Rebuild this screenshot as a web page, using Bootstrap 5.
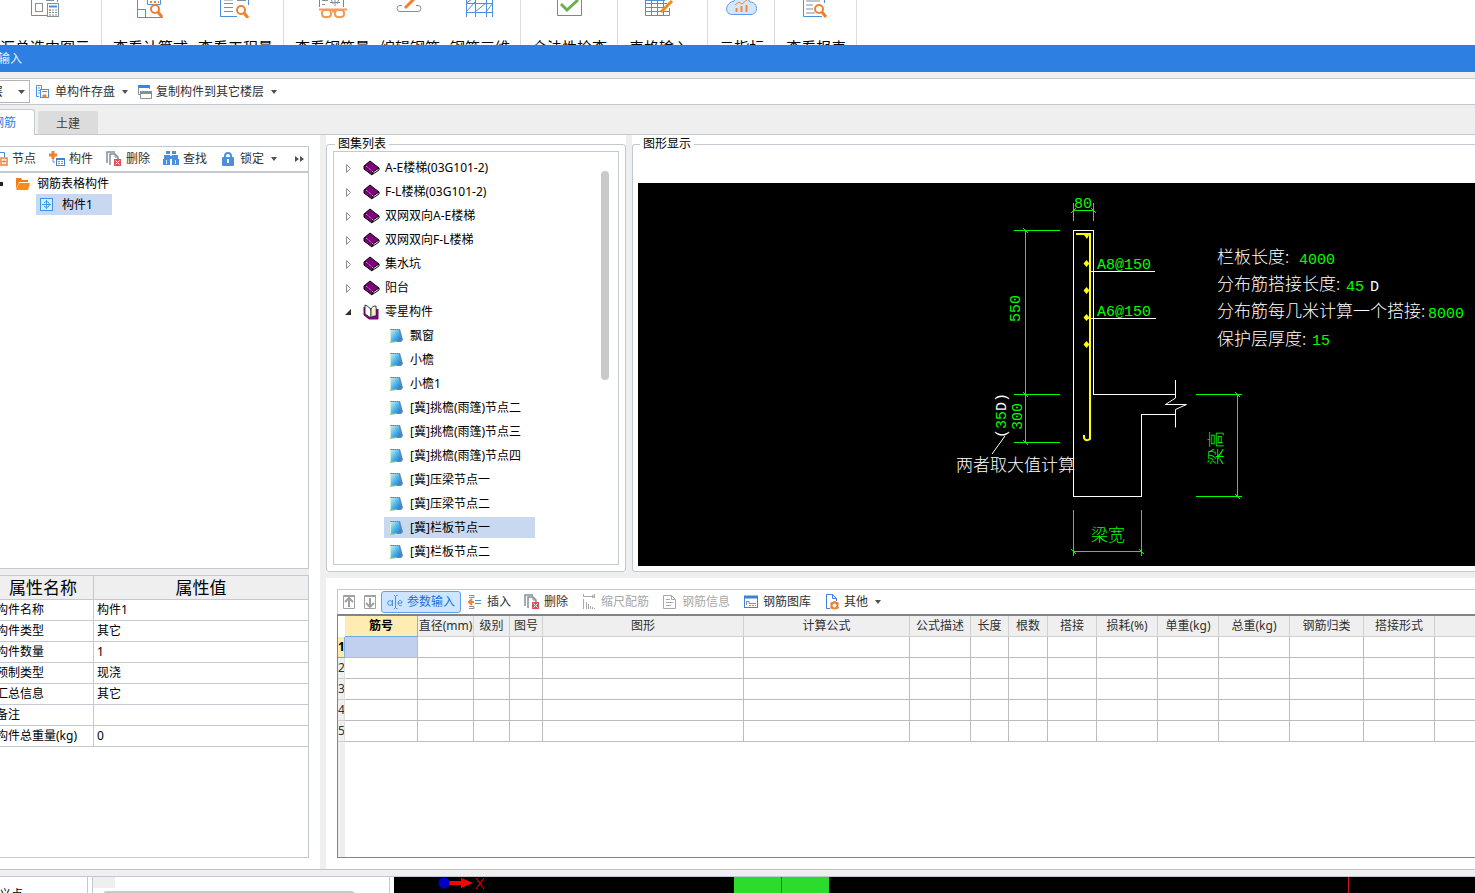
<!DOCTYPE html>
<html lang="zh-CN">
<head>
<meta charset="utf-8">
<meta name="viewport" content="width=device-width, initial-scale=1">
<title>表格输入</title>
<link href="https://cdn.jsdelivr.net/npm/bootstrap@5.3.0/dist/css/bootstrap.min.css" rel="stylesheet">
<style>
:root{--pane:#efefef;--line:#c4c8d0;--sel:#c8d8f0;--blue:#4a90dd}
body{font-family:"Noto Sans","Noto Sans CJK SC",sans-serif;font-size:12px;line-height:20px;color:#000;background:#fff}
svg{display:block;flex:none}
button{font-size:12px}
/* the window is dragged past the left screen edge */
.bleed{margin-left:-40px;background:var(--pane)}
.ribbon{height:45px;font-size:15px}
.r-group{padding:0 10px 0 11px;gap:10px;border-right:1px solid #dcdcdc}
.r-group.first{padding:0 11px 0 0}
.r-group.wide{padding-right:18px}
.r-btn{font-size:15px;line-height:20px;border:0;background:none;padding:0;color:#000}
.r-btn svg{margin:0 auto 19px}
.titlebar{height:27px;line-height:27px;background:#2d7fe2;color:#e6f0fc;padding-left:14px}
.topbar{height:27px;margin-top:6px;background:#fff;border-top:1px solid var(--line);border-bottom:1px solid var(--line)}
.topbar .t-btn{padding:0 5px}
.t-btn{border:0;background:none;height:22px;line-height:20px;padding:0 6px;gap:4px;color:#303030;white-space:nowrap}
.t-btn:disabled{color:#a8a8a8}
.t-btn.picked{border:1px solid #5fa2ea;border-radius:3px;background:#cde5ff;color:#1a72d8;padding:0 5px}
.caret{width:0;height:0;border:3px solid transparent;border-top:4px solid #505050;border-bottom:0;margin-left:3px}
.floor{width:70px;height:23px;border:1px solid #b4b4b4;border-radius:0;font-size:12px;line-height:20px;padding:0 0 0 18px;background-color:#fff;color:#202020;background-position:right 4px center;background-size:7px 4px;background-image:url("data:image/svg+xml,%3Csvg xmlns='http://www.w3.org/2000/svg' viewBox='0 0 7 4'%3E%3Cpath d='M0 0h7L3.500 4z' fill='%23505050'/%3E%3C/svg%3E")}
.tabs{height:30px;border-bottom:1px solid var(--line);padding-left:13px;gap:3px}
.tab-x{height:23px;line-height:24px;padding:1px 18px 0;background:#dcdcdc;color:#404040;border:0;border-radius:3px 3px 0 0}
.tab-x.on{height:26px;background:#fff;color:#2d7fe2;border:1px solid var(--line);border-bottom:0;margin-bottom:-1px}
.side{width:360px;background:#fff;padding:11px 0 11px}
.side-in{width:349px;background:var(--pane);gap:6px}
.boxed{background:#fff;border:1px solid var(--line)}
.tree-box{flex:3 1 1px}
.prop-box{flex:2 1 0}
.bar{height:26px;padding-left:25px;border-bottom:2px solid var(--line)}
.bar .t-btn{margin-right:1px}
.bar .more{margin-left:5px}
.tree-row{height:21px;line-height:21px}
.folder-row{padding-left:38px;gap:6px}
.leaf{width:76px;margin-left:75px;padding-left:4px;gap:8px;background:var(--sel)}
.prop{width:100%;table-layout:fixed;border-collapse:separate;border-spacing:0}
.prop th{height:24px;font-size:17px;font-weight:400;line-height:23px;text-align:center;background:var(--pane);border-bottom:1px solid var(--line);padding:0}
.prop td{height:21px;line-height:20px;border-bottom:1px solid var(--line);padding:0 0 0 3px;white-space:nowrap}
.prop tr>*:first-child{border-right:1px solid var(--line);padding-left:35px}
.prop thead tr>*:first-child{padding-left:32px}
.split{width:6px}
.frame{background:#fff;padding-top:2px}
.group{border:1px solid var(--line);border-radius:3px;min-width:0}
.group legend{float:none;width:auto;font-size:12px;line-height:14px;margin:0 0 0 2px;padding:0 3px}
.atlas{width:300px;padding:0 6px 6px}
.atlas-in{border:1px solid var(--line);padding:4px 9px 0 10px}
.node{height:24px;line-height:24px;gap:5px}
.node .tw{width:14px}
.kid{height:21px;line-height:21px;margin:1px 0 2px 40px;padding-left:4px;gap:5px;width:151px}
.kid.on{background:var(--sel)}
.thumb{width:8px;height:209px;border-radius:4px;background:#c9c9c9;margin-top:15px}
.show{border-right:0;border-radius:3px 0 0 3px;padding:0 0 5px 5px}
.cad{background:#000;margin-top:32px}
.cad text{font-family:"Liberation Mono","Noto Sans CJK SC",monospace;font-size:15px;fill:#0f0}
.cad .hz{font-size:17px;font-family:"Noto Sans CJK SC",sans-serif;font-weight:300}
.cad .w{fill:#fff}
.detail{margin-top:6px;padding:11px 0 11px 11px}
.detail-bar{height:25px;border-top:1px solid #c8c8c8;border-left:1px solid #c8c8c8;padding-left:1px}
.detail-bar .t-btn{margin-right:1px}
.detail-bar .t-btn.sq{padding:0 4px;margin-right:0}
.detail-bar .t-btn.picked{margin-right:0}
.sheet{border:1px solid #808488;border-top-width:2px;border-right:0;background:linear-gradient(to right,#efefef 7px,#fff 7px)}
.grid{width:100%;table-layout:fixed;border-collapse:separate;border-spacing:0}
.grid th{height:21px;line-height:20px;font-weight:400;color:#303030;text-align:center;background:#efefef;border-right:1px solid #d0d0d0;border-bottom:1px solid #d0d0d0;padding:0;white-space:nowrap;overflow:hidden}
.grid td{height:21px;border-right:1px solid #bcbcbc;border-bottom:1px solid #bcbcbc;padding:0;background:#fff}
.grid tr>*:last-child{border-right:0}
.grid tbody th{border-right-color:#e0e0e0;text-align:left}
.grid .hot{background:#ffecb0;font-weight:700;color:#000;border-right-color:#80b4ec;border-bottom-color:#6aaae8}
.grid .cur{background:#c0d0ee}
.grid .blank{background:#fff;border-color:#fff}
.foot-line{height:8px;border-top:1px solid #c4c4c4;border-bottom:1px solid #c0c8d8;background:var(--pane)}
.under{height:16px}
.u1{width:88px;border-right:1px solid var(--line);padding-top:8px}
.u1 span{margin-left:-13px}
.u2{width:298px;margin-left:4px;border:1px solid var(--line);border-width:0 1px}
.u2 .corner{width:22px;height:11px;background:var(--pane)}
.u2 .track{width:252px;height:8px;margin:3px 0 0 10px;border-radius:4px;background:#c9c9c9}
.u3{margin-left:4px;background:#000}
.fit{min-width:0}
</style>
</head>
<body>
<svg width="0" height="0" class="position-absolute" aria-hidden="true">
<defs>
<g id="book"><path d="M1 6 7 1l9 7-6 5z" fill="#800080" stroke="#000"/><path d="M1 6v3l8 6 1-2" fill="#800080" stroke="#000"/><path d="M10 12l6-4v2l-6 4z" fill="#fff" stroke="#000"/><path d="M3 6l7 6" stroke="#e8c0e8" stroke-dasharray="1 1"/></g>
<g id="openbook"><path d="M1 3v8l5 4h9V5" fill="#800080" stroke="#800080"/><path d="M2 1c3 1 5 3 6 5v8L2 10z" fill="#fff" stroke="#333"/><path d="M8 5c1-2 2-3 5-3v10c-3 0-4 0-5 2z" fill="#fff" stroke="#333"/><path d="M10 5v7M12 4v7" stroke="#e8d890"/></g>
<linearGradient id="pg" x2="1" y2="1"><stop offset="0" stop-color="#b8ecff"/><stop offset=".5" stop-color="#46b4ee"/><stop offset="1" stop-color="#1d6fc0"/></linearGradient>
<g id="note"><path d="M3 1h9l3 11-2 2H4z" fill="#5a88b8"/><path d="M2 2h2v12l-2 1z" fill="#d8f0c8"/><path d="M3 2h8l2 10-10 2z" fill="url(#pg)"/><path d="M2 14l7-1v1l-7 1z" fill="#90c8a8"/><path d="M2 1.500h10" stroke="#a09888" stroke-dasharray="1 1"/></g>
<g id="del"><path d="M1 12V1h8M4 14V3h5l3 3v2" fill="none" stroke="#82909a" stroke-width="1.500"/><path d="M9 3v3h3" fill="none" stroke="#82909a"/><rect x="8" y="8" width="7" height="7" fill="#d9505a"/><path d="M9.500 9.500l4 4m0-4l-4 4" stroke="#fff"/></g>
<g id="mag" fill="none" stroke="#ef8030"><circle cx="5" cy="5" r="4" stroke-width="2"/><path d="M8 8l4 5" stroke-width="3"/></g>
</defs>
</svg>

<div class="d-flex flex-column vh-100 overflow-hidden">
<header class="ribbon d-flex overflow-hidden flex-shrink-0">
  <div class="r-group first d-flex"><button class="r-btn text-nowrap"><svg width="32" height="18" viewBox="0 0 32 18" fill="none"><path d="M2.500 0v15.500H18M28.500 0v2" stroke="#4a90dd"/><rect x="6.500" y="3.500" width="7" height="8" stroke="#82909a"/><path d="M17 .5h8" stroke="#82909a"/><rect x="18.500" y="3.500" width="11" height="13" fill="#fff" stroke="#82909a"/><path d="M20 6.500h8" stroke="#4a90dd" stroke-width="2"/><path d="M20 10h8M20 12.500h8M20 15h8" stroke="#82909a" stroke-dasharray="2 1"/><path d="M20 10h2" stroke="#ef8030"/></svg>汇总选中图示</button></div>
  <div class="r-group d-flex"><button class="r-btn text-nowrap"><svg width="32" height="18" viewBox="0 0 32 18" fill="none"><path d="M2.500 0v17.500H28M10.500 9v8M2.500 9.500h8M12.500 0v4.500h13V0" stroke="#4a90dd"/><path d="M15 2h9" stroke="#ef8030" stroke-width="2" stroke-dasharray="2"/><use href="#mag" x="15" y="4"/></svg>查看计算式</button><button class="r-btn text-nowrap"><svg width="32" height="18" viewBox="0 0 32 18" fill="none"><path d="M.5 0v16.500H17M28.500 0v5" stroke="#4a90dd"/><path d="M4 0h9M4 3.500h9M4 7.500h9M4 11.500h9M17 .5h9" stroke="#82909a"/><g transform="translate(16 5)"><use href="#mag"/></g></svg>查看工程量</button></div>
  <div class="r-group d-flex"><button class="r-btn text-nowrap"><svg width="32" height="18" viewBox="0 1 32 18" fill="none"><path d="M2.500 0v8M26.500 0v8" stroke="#4a90dd"/><path d="M5 1.500h6M5 5.500h3M18 0v7M13 3.500h10M14 0l2 5M22 0l-2 5" stroke="#82909a"/><g stroke="#f59a55" stroke-width="2"><path d="M2 10.500h28M15 12.500h3"/><rect x="5" y="11" width="9" height="7" rx="3"/><rect x="18" y="11" width="9" height="7" rx="3"/></g></svg>查看钢筋量</button><button class="r-btn text-nowrap"><svg width="32" height="18" viewBox="0 0 32 18" fill="none"><path d="M8 5.500H6a3 3 0 0 0 0 6h18a3 3 0 0 0 0-6h-2" stroke="#82909a"/><path d="M11 8L20-1" stroke="#ef8030" stroke-width="3"/></svg>编辑钢筋</button><button class="r-btn text-nowrap"><svg width="32" height="18" viewBox="0 0 32 18" fill="none" stroke="#4a90dd"><path d="M2.500 0v17M11.500 0v17M22.500 0v17M28.500 0v17M2 3.500h27M2 12.500h27M2 12l9-10M2 3l5-3M11 12l11-9M22 12l7-9"/></svg>钢筋三维</button></div>
  <div class="r-group d-flex"><button class="r-btn text-nowrap"><svg width="32" height="18" viewBox="0 0 32 18" fill="none"><path d="M3.500 0v15.500h24V0" stroke="#4a90dd"/><path d="M7 4l6 6L24 0" stroke="#6fae50" stroke-width="3"/></svg>合法性检查</button></div>
  <div class="r-group wide d-flex"><button class="r-btn text-nowrap"><svg width="32" height="18" viewBox="0 0 32 18" fill="none"><path d="M2.500 0v15.500h24V8M8.500 0v15M14.500 0v15M20.500 0v15M2 3.500h22M2 7.500h20M2 11.500h24M2 .5h20" stroke="#4a90dd"/><path d="M18 12L29 1" stroke="#ee8a20" stroke-width="3"/></svg>表格输入</button></div>
  <div class="r-group d-flex"><button class="r-btn text-nowrap"><svg width="32" height="18" viewBox="0 0 32 18" fill="none"><path d="M8 1C10-4 22-4 24 2c8 0 9 12 1 12.500H6C-2 14-1 3 8 1z" fill="#d6e6fa" stroke="#5b9be6"/><path d="M10.500 12V8M15.500 12V6M20.500 12V5" stroke="#f0883a" stroke-width="2"/><path d="M9 5l4-3 3 2 6-5" stroke="#f0883a"/></svg>云指标</button></div>
  <div class="r-group d-flex"><button class="r-btn text-nowrap"><svg width="32" height="18" viewBox="0 0 32 18" fill="none"><path d="M3.500 0v16.500H22M24.500 0v3" stroke="#4a90dd"/><path d="M6 1h14M6 5h7M6 9h7M6 13h9" stroke="#82909a"/><g transform="translate(14 4)"><use href="#mag"/></g></svg>查看报表</button></div>
</header>

<div class="bleed d-flex flex-column flex-grow-1">
  <div class="titlebar flex-shrink-0">表格输入</div>
  <div class="topbar d-flex align-items-center flex-shrink-0">
    <select class="form-select floor" aria-label="楼层"><option>首层</option></select>
    <button class="t-btn d-flex align-items-center"><svg width="16" height="16" viewBox="0 0 16 16" fill="none"><path d="M4 12.500H1.500v-11h5V5" stroke="#4a90dd"/><path d="M3 4h2M3 6.500h2M3 9h2" stroke="#4a90dd"/><rect x="5.500" y="5.500" width="8" height="8" fill="#fff" stroke="#4a90dd"/><path d="M7 7.500h5" stroke="#4a90dd"/><path d="M7.500 12h4" stroke="#ef8030" stroke-width="3"/></svg>单构件存盘<span class="caret"></span></button>
    <button class="t-btn d-flex align-items-center"><svg width="14" height="16" viewBox="1 0 14 16"><path d="M1 1h12v3H1z" fill="#3d82d8"/><path d="M1.500 3v7.500H4M12.500 3v2" fill="none" stroke="#82909a"/><path d="M3.500 7.500h11v7h-11z" fill="#fff" stroke="#82909a"/><path d="M3 7h12v3H3z" fill="#82909a"/></svg>复制构件到其它楼层<span class="caret"></span></button>
  </div>
  <div class="tabs d-flex align-items-end flex-shrink-0" role="tablist">
    <button class="tab-x on" role="tab" aria-selected="true">钢筋</button>
    <button class="tab-x" role="tab" aria-selected="false">土建</button>
  </div>

  <main class="d-flex flex-grow-1">
    <aside class="side d-flex flex-shrink-0">
      <div class="side-in d-flex flex-column">
        <section class="tree-box boxed">
          <div class="bar d-flex align-items-center">
            <button class="t-btn d-flex align-items-center"><svg width="16" height="16" viewBox="0 0 16 16" fill="none"><path d="M2.500 13V1.500h10V6" stroke="#4a90dd"/><rect x="9" y="7" width="6" height="7" fill="#fff" stroke="#ef8030" stroke-width="1.500"/><path d="M10 10.500h4M12 8.500v4" stroke="#ef8030"/></svg>节点</button>
            <button class="t-btn d-flex align-items-center"><svg width="16" height="16" viewBox="0 0 16 16" fill="none"><path d="M4 0v8M0 4h8" stroke="#ef8030" stroke-width="3"/><rect x="7.500" y="7.500" width="8" height="7" fill="#fff" stroke="#3d82d8"/><path d="M7 8h9" stroke="#3d82d8" stroke-width="2"/><path d="M9 10.500h5M9 12.500h5" stroke="#82909a" stroke-dasharray="2 1"/><path d="M4 8v3h2" stroke="#82909a"/></svg>构件</button>
            <button class="t-btn d-flex align-items-center"><svg width="16" height="16" viewBox="0 0 16 16"><use href="#del"/></svg>删除</button>
            <button class="t-btn d-flex align-items-center"><svg width="16" height="16" viewBox="0 0 16 16" fill="#4a90dd"><path d="M3 0h4v3H3zM9 0h4v3H9zM1 4h14v4H1zM0 8h7v6H0zM9 8h7v6H9z"/><path d="M3 9h1v4H3zM12 9h1v4h-1zM7 4h2v1H7z" fill="#d8e8fa"/></svg>查找</button>
            <button class="t-btn d-flex align-items-center"><svg width="16" height="16" viewBox="0 0 16 16"><path d="M5 7V5c0-4 6-4 6 0v2" fill="none" stroke="#4a90dd" stroke-width="2"/><rect x="2" y="6" width="12" height="9" rx="1" fill="#4a90dd"/><path d="M7 8h2v4H7z" fill="#fff"/></svg>锁定<span class="caret"></span></button>
            <button class="t-btn more d-flex align-items-center" aria-label="更多"><svg width="9" height="6" viewBox="0 0 9 6"><path d="M0 0l4 3-4 3zM5 0l4 3-4 3z" fill="#505050"/></svg></button>
          </div>
          <div class="tree-row folder-row d-flex align-items-center"><svg width="10" height="8" viewBox="0 0 10 8"><path d="M1 6V2h3v4z" fill="#222"/></svg><svg width="16" height="14" viewBox="0 0 16 14"><path d="M1 12V1h5l1 2h6v2H4z" fill="#f57c10"/><path d="M4 6h11l-2 7H1z" fill="#ff8a18"/></svg>钢筋表格构件</div>
          <div class="tree-row leaf d-flex align-items-center"><svg width="14" height="14" viewBox="0 0 14 14" fill="none"><rect x=".5" y=".5" width="12" height="12" fill="#d4ecff" stroke="#3d94e4"/><path d="M6.500 2v9M2 6.500h9M4 5l2.500-2L9 5v3l-2.500 2L4 8" stroke="#4a98e4"/></svg>构件1</div>
        </section>
        <section class="prop-box boxed">
          <table class="prop"><colgroup><col style="width:133px"><col></colgroup>
            <thead><tr><th>属性名称</th><th>属性值</th></tr></thead>
            <tbody>
              <tr><td>构件名称</td><td>构件1</td></tr>
              <tr><td>构件类型</td><td>其它</td></tr>
              <tr><td>构件数量</td><td>1</td></tr>
              <tr><td>预制类型</td><td>现浇</td></tr>
              <tr><td>汇总信息</td><td>其它</td></tr>
              <tr><td>备注</td><td></td></tr>
              <tr><td>构件总重量(kg)</td><td>0</td></tr>
            </tbody>
          </table>
        </section>
      </div>
    </aside>
    <div class="split flex-shrink-0"></div>

    <div class="fit d-flex flex-column flex-grow-1">
      <div class="d-flex">
        <div class="frame flex-shrink-0">
        <fieldset class="group atlas"><legend>图集列表</legend>
          <div class="atlas-in d-flex justify-content-between">
            <div id="atlasList" class="d-flex flex-column"></div>
            <div class="thumb"></div>
          </div>
        </fieldset>
        </div>
        <div class="split flex-shrink-0"></div>
        <div class="frame fit flex-grow-1">
        <fieldset class="group show"><legend>图形显示</legend>
          <div class="cad overflow-hidden">
          <svg width="837" height="383" viewBox="638 183 837 383" fill="none">
            <g stroke="#0f0" shape-rendering="crispEdges">
              <path d="M1073.500 203v18M1093.500 203v18M1073 210.500h20M1014 230.500h46M1025.500 230v213M1014 394.500h46M1014 442.500h46M1073.500 510v46M1141.500 510v46M1073 551.500h68M1196 394.500h46M1237.500 394v103M1196 496.500h46"/>
              <path d="M1071 213l5-5M1091 208l5 5M1023 228l5 5M1023 392l5 5M1023 440l5 5M1071 549l5 5M1139 549l5 5M1235 392l5 5M1235 494l5 5"/>
            </g>
            <path d="M1175.500 394.500h-82V230.500h-20v266h68v-82h34M1090 271.500h65M1088 318.500h68" stroke="#fff" shape-rendering="crispEdges"/>
            <path d="M1175.500 380v18l-10 6.500h21l-11 5v18" stroke="#fff"/>
            <path d="M1005 436l-13 18" stroke="#fff"/>
            <path d="M1076 234h14v205q-4 3-6-1v-3" stroke="#ff0" stroke-width="2"/>
            <path d="M1084 235h5l-2 4zM1086.500 260l3 3.500-3 3.500-3-3.500zM1086.500 287l3 3.500-3 3.500-3-3.500zM1086.500 314l3 3.500-3 3.500-3-3.500zM1086.500 341l3 3.500-3 3.500-3-3.500z" fill="#ff0"/>
            <text x="1074" y="208">80</text>
            <text x="1097" y="269">A8@150</text>
            <text x="1097" y="316">A6@150</text>
            <text transform="translate(1020 322) rotate(-90)">550</text>
            <text transform="translate(1022 430) rotate(-90)">300</text>
            <text transform="translate(1006 438) rotate(-90)"><tspan class="w">(</tspan>35<tspan class="w">D)</tspan></text>
            <text class="hz w" x="956" y="471">两者取大值计算</text>
            <text class="hz" x="1091" y="541">梁宽</text>
            <text class="hz" transform="translate(1222 465) rotate(-90)">梁高</text>
            <text class="hz w" x="1217" y="263">栏板长度:</text><text x="1299" y="264">4000</text>
            <text class="hz w" x="1217" y="290">分布筋搭接长度:</text><text x="1346" y="291">45</text><text class="w" x="1370" y="291">D</text>
            <text class="hz w" x="1217" y="317">分布筋每几米计算一个搭接:</text><text x="1428" y="318">8000</text>
            <text class="hz w" x="1217" y="345">保护层厚度:</text><text x="1312" y="345">15</text>
          </svg>
          </div>
        </fieldset>
        </div>
      </div>

      <section class="detail bg-white d-flex flex-column flex-grow-1">
        <div class="detail-bar d-flex align-items-center flex-shrink-0">
          <button class="t-btn sq d-flex align-items-center" disabled aria-label="上移"><svg width="13" height="16" viewBox="0 0 13 16" fill="none" stroke="#a0a0a0"><path d="M.5 14.500v-13h11v13z"/><path d="M1 2h11" stroke-width="2"/><path d="M6 13V5M2 8l4-4 4 4" stroke-width="2"/></svg></button>
          <button class="t-btn sq d-flex align-items-center" disabled aria-label="下移"><svg width="13" height="16" viewBox="0 0 13 16" fill="none" stroke="#a0a0a0"><path d="M.5 14.500v-13h11v13z"/><path d="M1 2h11" stroke-width="2"/><path d="M6 4v8M2 9l4 4 4-4" stroke-width="2"/></svg></button>
          <button class="t-btn picked d-flex align-items-center"><svg width="16" height="16" viewBox="0 0 16 16" fill="none" stroke="#4a90dd"><circle cx="3" cy="9" r="2.300"/><path d="M5.500 6v6M8.500 2v12M7 1.500h1M9 1.500h1.500M7 14.500h1M9 14.500h1.500M11 9h4c0-4-4-3-4 0 0 3 3 3 4 2"/></svg>参数输入</button>
          <button class="t-btn d-flex align-items-center"><svg width="16" height="16" viewBox="0 0 16 16" fill="none"><path d="M2 1.500h5v2H2M2 12.500h5v2H2" stroke="#82909a"/><path d="M2 8h5M5 5L2 8l3 3" stroke="#ef8030" stroke-width="2"/><path d="M8 6.500h6M8 9.500h6" stroke="#4a90dd"/></svg>插入</button>
          <button class="t-btn d-flex align-items-center"><svg width="16" height="16" viewBox="0 0 16 16"><use href="#del"/></svg>删除</button>
          <button class="t-btn d-flex align-items-center" disabled><svg width="16" height="16" viewBox="0 0 16 16" fill="none" stroke="#a8a8a8"><path d="M2.500 0v3M2 2.500h10M13.500 0v4M11 1l2 1.500L11 4M2.500 5v10M5.500 8v7M7.500 10v5M9.500 12v3M11.500 13v2M13.500 14v1"/></svg>缩尺配筋</button>
          <button class="t-btn d-flex align-items-center" disabled><svg width="16" height="16" viewBox="0 0 16 16" fill="none" stroke="#a8a8a8"><path d="M1.500 1.500h8l4 4v9h-12zM9.500 1.500v4h4M4 5.500h4M4 8.500h7M4 11.500h5"/></svg>钢筋信息</button>
          <button class="t-btn d-flex align-items-center"><svg width="16" height="16" viewBox="0 0 16 16" fill="none"><rect x="1.500" y="2.500" width="13" height="11" stroke="#3d82d8"/><path d="M1 3h14" stroke="#3d82d8" stroke-width="3"/><path d="M3 7.500h3v2h7M3.500 7v4" stroke="#82909a"/><path d="M6 11.500h7" stroke="#ef8030" stroke-dasharray="2 1"/></svg>钢筋图库</button>
          <button class="t-btn d-flex align-items-center"><svg width="16" height="16" viewBox="0 0 16 16" fill="none"><path d="M6 14.500H2.500v-14h6l4 4V7M8.500.5v4h4" stroke="#3d82d8"/><circle cx="10.500" cy="11.500" r="3" stroke="#ef8030" stroke-width="2"/><path d="M10.500 7v2M6.500 9l2 1M14.500 9l-2 1M6.500 14l2-1M14.500 14l-2-1" stroke="#ef8030" stroke-width="2"/></svg>其他<span class="caret"></span></button>
        </div>
        <div class="sheet flex-grow-1">
          <table class="grid">
            <colgroup id="cols"></colgroup>
            <thead><tr id="heads"></tr></thead>
            <tbody id="rows"></tbody>
          </table>
        </div>
      </section>
    </div>
  </main>
</div>
<div class="foot-line flex-shrink-0"></div>
<footer class="under d-flex flex-shrink-0 overflow-hidden">
  <div class="u1"><span>定义点</span></div>
  <div class="u2"><div class="corner"></div><div class="track"></div></div>
  <div class="u3 flex-grow-1 overflow-hidden"><svg width="1081" height="16" viewBox="394 877 1081 16"><path d="M734 877h95v16h-95z" fill="#2cdc2c"/><path d="M781.500 877v16M1348.500 877v16" stroke="#d01818"/><path d="M448 883h14" stroke="#f00" stroke-width="4"/><path d="M461 878l12 5-12 5z" fill="#f00"/><circle cx="444" cy="883" r="5.500" fill="#0000c8"/><path d="M476 878l8 11M484 878l-8 11" stroke="#f00"/></svg></div>
</footer>
</div>

<script src="https://cdn.jsdelivr.net/npm/bootstrap@5.3.0/dist/js/bootstrap.bundle.min.js"></script>
<script>
const books=['A-E楼梯(03G101-2)','F-L楼梯(03G101-2)','双网双向A-E楼梯','双网双向F-L楼梯','集水坑','阳台'];
const kids=['飘窗','小檐','小檐1','[冀]挑檐(雨篷)节点二','[冀]挑檐(雨篷)节点三','[冀]挑檐(雨篷)节点四','[冀]压梁节点一','[冀]压梁节点二','[冀]栏板节点一','[冀]栏板节点二'];
const icon=id=>`<svg width="17" height="16" viewBox="0 0 17 16" fill="none"><use href="#${id}"/></svg>`;
const node=(t,id,open)=>`<div class="node d-flex align-items-center"><svg class="tw" height="9" viewBox="0 0 14 9">${open?'<path d="M7 1v6H1z" fill="#303030"/>':'<path d="M2.500.5l4 4-4 4z" fill="#fff" stroke="#909090"/>'}</svg>${icon(id)}${t}</div>`;
document.getElementById('atlasList').innerHTML=books.map(b=>node(b,'book')).join('')+node('零星构件','openbook',true)
 +kids.map((k,i)=>`<div class="kid d-flex align-items-center${i===8?' on':''}">${icon('note')}<span>${k}</span></div>`).join('');
const cols=[['',7],['筋号',73],['直径(mm)',56],['级别',36],['图号',33],['图形',201],['计算公式',166],['公式描述',61],['长度',38],['根数',39],['搭接',49],['损耗(%)',61],['单重(kg)',61],['总重(kg)',71],['钢筋归类',74],['搭接形式',71],['',0]];
document.getElementById('cols').innerHTML=cols.map(c=>c[1]?`<col style="width:${c[1]}px">`:'<col>').join('');
document.getElementById('heads').innerHTML=cols.map((c,i)=>`<th class="${i===0?'blank':i===1?'hot':''}">${c[0]}</th>`).join('');
document.getElementById('rows').innerHTML=[1,2,3,4,5].map(r=>`<tr><th class="${r===1?'hot':''}">${r}</th>`+cols.slice(1).map((c,i)=>`<td${r===1&&i===0?' class="cur"':''}></td>`).join('')+'</tr>').join('');
</script>
</body>
</html>
